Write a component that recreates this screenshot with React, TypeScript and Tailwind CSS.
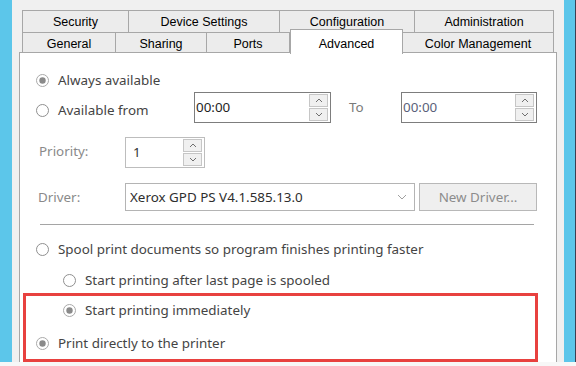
const ui = { fontFamily: '"Noto Sans", "Open Sans", sans-serif' }
const tabFont = { fontFamily: '"Liberation Sans", Arial, sans-serif' }

function Radio({ checked = false }: { checked?: boolean }) {
  return (
    <svg width="13" height="13" viewBox="0 0 13 13" className="shrink-0">
      <circle cx="6.5" cy="6.5" r="6" fill="#fff" stroke={checked ? "#a9a9a9" : "#8f8f8f"} strokeWidth="1" />
      {checked && <circle cx="6.5" cy="6.5" r="3.2" fill="#8a8a8a" />}
    </svg>
  )
}

function Chevron({ up = false }: { up?: boolean }) {
  return (
    <svg width="8" height="5" viewBox="0 0 8 5">
      <path d={up ? "M1 4 L4 1 L7 4" : "M1 1 L4 4 L7 1"} fill="none" stroke="#6f6f6f" strokeWidth="1" />
    </svg>
  )
}

function SpinButtons() {
  return (
    <div className="flex h-full flex-col gap-px py-px pr-[2px]">
      <div className="flex w-[19px] flex-1 items-center justify-center border border-[#c6c6c6] bg-[#f0f0f0]">
        <Chevron up />
      </div>
      <div className="flex w-[19px] flex-1 items-center justify-center border border-[#c6c6c6] bg-[#f0f0f0]">
        <Chevron />
      </div>
    </div>
  )
}

function RadioRow({ label, checked = false, className = "" }: { label: string; checked?: boolean; className?: string }) {
  return (
    <div className={"flex h-[20px] items-center gap-[9px] " + className}>
      <Radio checked={checked} />
      <span className="pt-[2px] text-[13.4px] leading-none text-[#444]">{label}</span>
    </div>
  )
}

export default function App() {
  return (
    <div className="flex h-[366px] w-[576px] flex-col overflow-hidden bg-[#f7f7f7]" style={ui}>
      <div className="flex h-[362px]">
        <div className="w-[12px] bg-[#5cc6ea]" />

        <div className="flex w-[552px] flex-col bg-[#f0f0f0] px-[7px] pt-[10px]">
          {/* tab rows */}
          <div className="flex flex-col px-[3px] text-[12.5px] text-black" style={tabFont}>
            <div className="flex h-[22px]">
              <div className="flex w-[107px] items-center justify-center border-l border-r border-t border-[#a7a7a7] bg-[#ececec] pt-[2px]">Security</div>
              <div className="flex w-[151px] items-center justify-center border-r border-t border-[#a7a7a7] bg-[#ececec] pt-[2px]">Device Settings</div>
              <div className="flex w-[135px] items-center justify-center border-r border-t border-[#a7a7a7] bg-[#ececec] pt-[2px]">Configuration</div>
              <div className="flex w-[139px] items-center justify-center border-r border-t border-[#a7a7a7] bg-[#ececec] pt-[2px]">Administration</div>
            </div>
            <div className="flex h-[20px] items-start">
              <div className="flex h-[20px] w-[94px] items-center justify-center border-l border-r border-t border-[#a7a7a7] bg-[#ececec] pt-[4px]">General</div>
              <div className="flex h-[20px] w-[91px] items-center justify-center border-r border-t border-[#a7a7a7] bg-[#ececec] pt-[4px]">Sharing</div>
              <div className="flex h-[20px] w-[83px] items-center justify-center border-r border-t border-[#a7a7a7] bg-[#ececec] pt-[4px]">Ports</div>
              <div className="relative z-10 -mt-[3px] flex h-[25px] w-[113px] justify-center border-l border-r border-t border-[#a7a7a7] bg-white pt-[5px]">Advanced</div>
              <div className="flex h-[20px] w-[151px] items-center justify-center border-r border-t border-[#a7a7a7] bg-[#ececec] pt-[4px]">Color Management</div>
            </div>
          </div>

          {/* panel */}
          <div className="flex flex-1 flex-col border-l border-r border-t border-[#a7a7a7] bg-white pl-[16px]">
            <RadioRow label="Always available" checked className="mt-[17px]" />

            <div className="mt-[2px] flex h-[31px]">
              <div className="w-[158px] pt-[8px]">
                <RadioRow label="Available from" />
              </div>
              <div className="flex h-[31px] w-[137px] items-center justify-between border border-[#7d7d7d] bg-white">
                <span className="pl-[1px] text-[13.4px] text-[#1e1e1e]">00:00</span>
                <SpinButtons />
              </div>
              <div className="flex w-[70px] items-center pl-[18px] text-[13.4px] text-[#7a7a7a]">To</div>
              <div className="flex h-[31px] w-[136px] items-center justify-between border border-[#7d7d7d] bg-white">
                <span className="pl-[1px] text-[13.4px] text-[#5a5f7a]">00:00</span>
                <SpinButtons />
              </div>
            </div>

            <div className="mt-[14px] flex h-[31px] items-center">
              <div className="w-[89px] pb-[3px] pl-[3px] text-[13.4px] text-[#8a8a8a]">Priority:</div>
              <div className="flex h-[31px] w-[80px] items-center justify-between border border-[#bdbdbd] bg-white">
                <span className="pl-[7px] text-[13.4px] text-[#333]">1</span>
                <SpinButtons />
              </div>
            </div>

            <div className="mt-[15px] flex h-[28px] items-center">
              <div className="w-[89px] pl-[2px] text-[13.4px] text-[#8a8a8a]">Driver:</div>
              <div className="flex h-[28px] w-[290px] items-center justify-between border border-[#b4b4b4] bg-white pl-[4px] pr-[7px]">
                <span className="text-[13.4px] text-[#2e2e2e]">Xerox GPD PS V4.1.585.13.0</span>
                <svg width="10" height="6" viewBox="0 0 10 6">
                  <path d="M1 1 L5 5 L9 1" fill="none" stroke="#a0a0a0" strokeWidth="1" />
                </svg>
              </div>
              <div className="ml-[4px] flex h-[28px] w-[118px] items-center justify-center border border-[#b8b8b8] bg-[#efefef] text-[13.4px] text-[#8c8c8c]">
                New Driver...
              </div>
            </div>

            <div className="ml-[4px] mt-[13px] h-px w-[494px] bg-[#a5a5a5]" />

            <RadioRow label="Spool print documents so program finishes printing faster" className="mt-[14px]" />
            <RadioRow label="Start printing after last page is spooled" className="ml-[27px] mt-[11px]" />

            <div className="-ml-[13px] mt-[3px] flex h-[69px] w-[515px] flex-col border-[3px] border-[#e8413f] pl-[10px]">
              <RadioRow label="Start printing immediately" checked className="ml-[27px] mt-[4px]" />
              <RadioRow label="Print directly to the printer" checked className="mt-[13px]" />
            </div>
          </div>
        </div>

        <div className="w-[11px] bg-[#5cc6ea]" />
        <div className="w-px bg-[#3b3f52]" />
      </div>
    </div>
  )
}
